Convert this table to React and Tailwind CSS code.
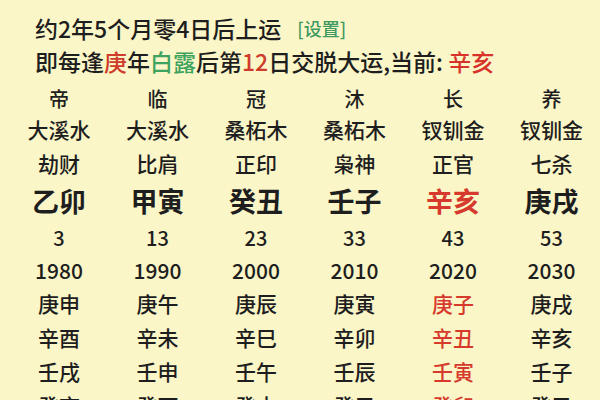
import React from 'react';

const cols = [
  { stage: '帝', nayin: '大溪水', god: '劫财', gz: '乙卯', age: '3', year: '1980', years: ['庚申', '辛酉', '壬戌', '癸亥'] },
  { stage: '临', nayin: '大溪水', god: '比肩', gz: '甲寅', age: '13', year: '1990', years: ['庚午', '辛未', '壬申', '癸酉'] },
  { stage: '冠', nayin: '桑柘木', god: '正印', gz: '癸丑', age: '23', year: '2000', years: ['庚辰', '辛巳', '壬午', '癸未'] },
  { stage: '沐', nayin: '桑柘木', god: '枭神', gz: '壬子', age: '33', year: '2010', years: ['庚寅', '辛卯', '壬辰', '癸巳'] },
  { stage: '长', nayin: '钗钏金', god: '正官', gz: '辛亥', age: '43', year: '2020', years: ['庚子', '辛丑', '壬寅', '癸卯'], current: true },
  { stage: '养', nayin: '钗钏金', god: '七杀', gz: '庚戌', age: '53', year: '2030', years: ['庚戌', '辛亥', '壬子', '癸丑'] },
];

const font = { fontFamily: '"Noto Sans CJK SC", "Noto Sans", sans-serif' };

const App = () => {
  return (
    <div className="w-[600px] h-[400px] overflow-hidden bg-[#fbf6c8] text-[#1e1e1e] font-medium" style={font}>
      {/* 上运信息 */}
      <div className="pl-[35px] pt-[13px]">
        <div className="flex items-center h-[31px] text-[23px] leading-[31px] whitespace-nowrap">
          <span>约2年5个月零4日后上运</span>
          <span className="ml-[16px] text-[18px] text-[#3f9a62]">[设置]</span>
        </div>
        <div className="h-[34px] text-[23px] leading-[34px] whitespace-nowrap">
          即每逢<span className="text-[#cf3b2b]">庚</span>年<span className="text-[#3ea35e]">白露</span>后第<span className="text-[#cf3b2b]">12</span>日交脱大运,当前: <span className="text-[#d8332a]">辛亥</span>
        </div>
      </div>

      {/* 大运表 */}
      <div className="grid grid-cols-6 w-[600px] pl-[9px] mt-[6px]">
        {cols.map((c) => (
          <div key={c.gz} className={`flex flex-col items-center w-[100px] ${c.current ? 'text-[#d63a2c]' : ''}`}>
            <div className={`h-[30px] leading-[30px] text-[20px] ${c.current ? 'text-[#1e1e1e]' : ''}`}>{c.stage}</div>
            <div className={`h-[31px] leading-[31px] text-[21px] ${c.current ? 'text-[#1e1e1e]' : ''}`}>{c.nayin}</div>
            <div className={`h-[36px] leading-[36px] text-[21px] ${c.current ? 'text-[#1e1e1e]' : ''}`}>{c.god}</div>
            <div className="h-[40px] leading-[40px] text-[27px] font-bold">{c.gz}</div>
            <div className={`h-[34px] leading-[34px] text-[20px] ${c.current ? 'text-[#1e1e1e]' : ''}`}>{c.age}</div>
            <div className={`h-[31px] leading-[31px] text-[21px] ${c.current ? 'text-[#1e1e1e]' : ''}`}>{c.year}</div>
            {c.years.map((y) => (
              <div key={y} className="h-[34px] leading-[34px] text-[21px]">{y}</div>
            ))}
          </div>
        ))}
      </div>
    </div>
  );
};

export default App;
